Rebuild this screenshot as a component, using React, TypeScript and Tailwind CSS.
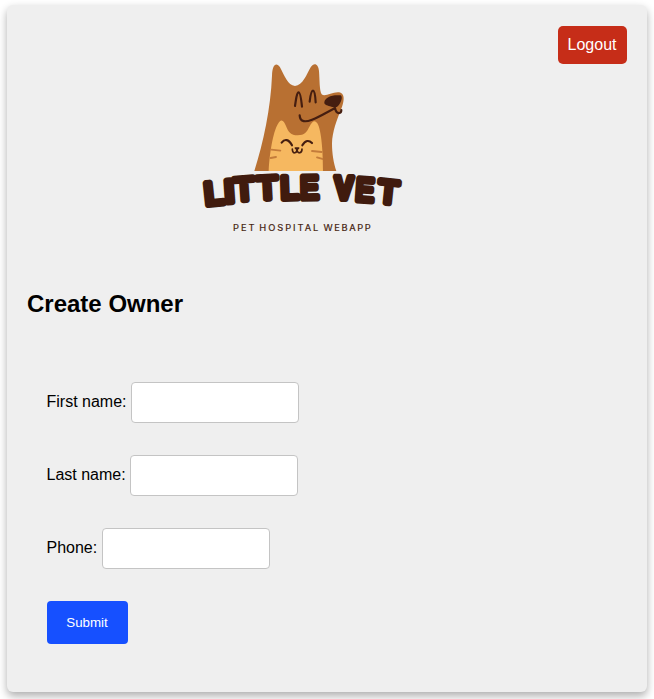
import React from "react";

const letters = [
  { ch: "L", x: 214, y: 193.3, r: -6, s: 1.1, w: 400 },
  { ch: "I", x: 229.3, y: 191.3, r: -4, s: 1.15, w: 400 },
  { ch: "T", x: 244.3, y: 189, r: -4, s: 1.03, w: 400 },
  { ch: "T", x: 267.3, y: 187.7, r: -3, s: 1.06, w: 400 },
  { ch: "L", x: 289.6, y: 187.6, r: -2, s: 1.02, w: 400 },
  { ch: "E", x: 309.4, y: 187.6, r: -1, s: 0.86, w: 400 },
  { ch: "V", x: 344, y: 188, r: 1, s: 0.85, w: 700 },
  { ch: "E", x: 365, y: 190, r: 4, s: 0.86, w: 400 },
  { ch: "T", x: 388.3, y: 192, r: 6, s: 1.03, w: 400 },
];

const words = [
  { text: "PET", x: 233, w: 21.5 },
  { text: "HOSPITAL", x: 259.3, w: 59 },
  { text: "WEBAPP", x: 323.4, w: 47.3 },
];

function Logo() {
  return (
    <svg
      className="ml-[173px] block"
      width="205"
      height="180"
      viewBox="200 55 205 180"
      role="img"
      aria-label="Little Vet"
    >
      <g transform="translate(240 55) scale(0.33333)" strokeLinecap="round" strokeLinejoin="round">
        <path
          fill="#b87032"
          d="M43 348C70 262 92 160 96 62C97 28 109 20 120 37C134 62 143 92 165 93C188 92 200 58 212 37C222 21 235 26 237 48C239 72 238 106 245 118C256 128 280 107 302 113C316 119 311 142 305 158C290 195 277 230 276 265C276 295 281 325 289 348Z"
        />
        <path
          fill="#f6b860"
          d="M86 348C89 290 101 222 117 202C126 190 132 200 138 213C146 232 152 241 173 241C194 241 200 232 209 214C216 199 224 193 232 205C245 226 249 296 249 348Z"
        />
        <path fill="#451e10" d="M253 142C254 126 278 118 302 121C309 126 304 141 296 151C289 160 281 158 270 154C260 151 252 149 253 142Z" />
        <g fill="none" stroke="#451e10" strokeWidth="6.5">
          <path d="M165 153C168 132 171 112 176 112C181 112 184 136 186 155" />
          <path d="M209 140C211 122 214 107 219 107C224 107 226 126 227 142" />
          <path d="M179 181C180 203 198 201 216 194C240 185 260 172 285 159C287 169 293 175 299 174C303 173 304 169 304 165" />
          <path d="M125 263C134 251 146 252 156 271" />
          <path d="M187 271C196 255 207 255 216 264" />
          <path strokeWidth="5" d="M157 282C157 298 171 296 171 283C171 298 186 296 186 282M171 285V279M166 279H176L171 284Z" />
        </g>
        <g fill="none" stroke="#c47c3b" strokeWidth="5.5">
          <path d="M94 284L121 287M92 309L108 306M216 288L245 291M231 307L247 312" />
        </g>
      </g>
      <g
        fill="#401b0e"
        stroke="#401b0e"
        strokeWidth="6.2"
        strokeLinejoin="round"
        textAnchor="middle"
        fontSize="32"
        fontFamily='"Liberation Sans", Arial, sans-serif'
      >
        {letters.map((l, i) => (
          <text
            key={i}
            x="0"
            y="11"
            fontWeight={l.w}
            transform={`translate(${l.x} ${l.y}) rotate(${l.r}) scale(${l.s} 1)`}
          >
            {l.ch}
          </text>
        ))}
      </g>
      <g fill="#451e10" stroke="#451e10" strokeWidth="0.2" fontSize="9.3" fontFamily='Inter, "Liberation Sans", sans-serif'>
        {words.map((word) => (
          <text key={word.text} x={word.x} y="230.6" textLength={word.w}>
            {word.text}
          </text>
        ))}
      </g>
    </svg>
  );
}

function Field({ label, id }: { label: string; id: string }) {
  return (
    <div className="flex h-[41px] items-center">
      <label htmlFor={id} className="mr-[4.5px] -mt-[2px]">
        {label}
      </label>
      <input id={id} className="h-[41px] w-[168px] rounded border border-[#c4c4c4] bg-white px-3 outline-none" />
    </div>
  );
}

export default function App() {
  return (
    <div className="h-[699px] overflow-hidden bg-white pl-[7px] pt-[5px] font-['Liberation_Sans',Arial,sans-serif] text-base text-black">
      <main className="h-[687px] w-[640px] rounded-md bg-[#efefef] px-5 pt-[21px] shadow-[0_4px_8px_rgba(0,0,0,0.32)]">
        <div className="flex h-[29px] justify-end">
          <button className="h-[38px] w-[69px] shrink-0 rounded-[5px] bg-[#c62d18] pr-px text-white">Logout</button>
        </div>
        <Logo />
        <h1 className="mt-[55px] text-2xl leading-7 font-bold">Create Owner</h1>
        <form className="mt-[64px] flex flex-col items-start gap-8 pl-[19.5px]">
          <Field label="First name:" id="first" />
          <Field label="Last name:" id="last" />
          <Field label="Phone:" id="phone" />
          <button type="button" className="h-[43px] w-[81px] rounded bg-[#1650ff] text-[13.33px] text-white">
            Submit
          </button>
        </form>
      </main>
    </div>
  );
}
